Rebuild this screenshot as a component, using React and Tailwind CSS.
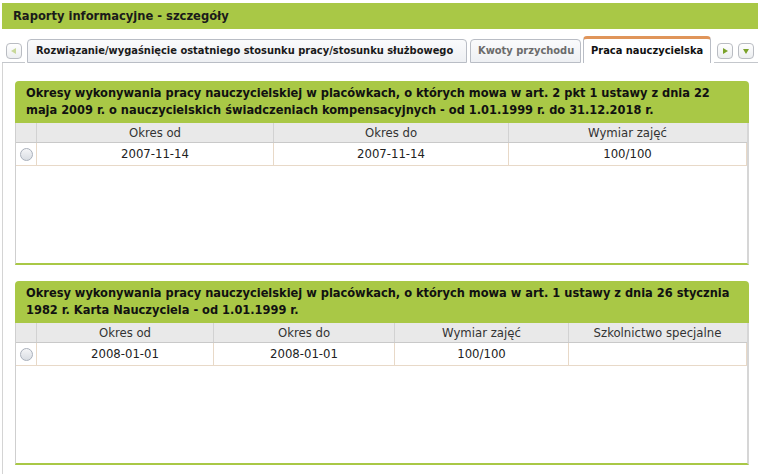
import React from "react";

const font = { fontFamily: '"DejaVu Sans Condensed", "DejaVu Sans", Tahoma, sans-serif' };

function Radio() {
  return (
    <span className="inline-block w-[13px] h-[13px] rounded-full border border-[#a9b0bb] bg-gradient-to-b from-[#f4f5f7] to-[#d9dde3]" />
  );
}

function ArrowBtn({ dir }) {
  return (
    <div className="w-[16px] h-[16px] rounded-[4px] border border-[#b9bcc2] bg-gradient-to-b from-white to-[#eceef0] flex items-center justify-center">
      <svg width="8" height="8" viewBox="0 0 8 8">
        {dir === "left" && <polygon points="6,1 6,7 1,4" fill="#c8d89a" />}
        {dir === "right" && <polygon points="2,1 2,7 7,4" fill="#7aa22a" />}
        {dir === "down" && <polygon points="1,2 7,2 4,7" fill="#7aa22a" />}
      </svg>
    </div>
  );
}

function Section({ title, cols, row, widths }) {
  return (
    <div className="mx-[12px] w-[734px]">
      <div className="bg-[#a9c846] rounded-t-[4px] h-[42px] pl-[11px] pr-[8px] pt-[3px] text-[12.7px] leading-[17px] font-bold text-[#111]">
        {title}
      </div>
      <div className="h-[142px] border-l border-[#cfcfcf] border-r-2 border-r-[#d6d6d6] border-b-2 border-b-[#a9c846] bg-white">
        <div className="flex h-[20px] bg-[#e9e9e9] border-b border-[#c9c9c9] text-[13px] text-[#333]">
          <div className="w-[21px] border-r border-[#d2d2d2]" />
          {cols.map((c, i) => (
            <div
              key={i}
              className={`flex items-center justify-center ${i < cols.length - 1 ? "border-r border-[#d2d2d2]" : ""}`}
              style={{ width: widths[i] }}
            >
              {c}
            </div>
          ))}
        </div>
        <div className="flex h-[23px] border-b border-[#e8d9c8] border-r text-[13px] text-[#222]">
          <div className="w-[21px] flex items-center justify-center border-r border-[#e8d9c8]">
            <Radio />
          </div>
          {row.map((c, i) => (
            <div
              key={i}
              className={`flex items-center justify-center ${i < row.length - 1 ? "border-r border-[#e8d9c8]" : ""}`}
              style={{ width: widths[i] }}
            >
              {c}
            </div>
          ))}
        </div>
      </div>
    </div>
  );
}

export default function App() {
  return (
    <div className="w-[758px] h-[474px] bg-white overflow-hidden" style={font}>
      <div className="pt-[3px] pl-[2px]">
        <div className="h-[26px] bg-[#a9c846] flex items-center pl-[11px] text-[12.8px] font-bold text-[#1a1a1a]">
          Raporty informacyjne - szczegóły
        </div>
      </div>
      {/* tab strip */}
      <div className="flex items-end h-[34px] pl-[2px]">
        <div className="w-[23px] h-[26px] border-b border-[#c4c7cc] flex items-start pl-[4px] pt-[6px]">
          <ArrowBtn dir="left" />
        </div>
        <div className="flex items-end gap-[3px] ml-[2px]">
          <div className="h-[24px] w-[440px] rounded-t-[4px] border border-[#b9bdc5] bg-gradient-to-b from-[#fafbfc] to-[#eef0f3] pl-[8px] flex items-center text-[11px] font-bold text-[#1a1a1a] whitespace-nowrap">
            Rozwiązanie/wygaśnięcie ostatniego stosunku pracy/stosunku służbowego
          </div>
          <div className="h-[24px] w-[111px] rounded-t-[4px] border border-[#b9bdc5] bg-gradient-to-b from-[#fafbfc] to-[#eef0f3] pl-[7px] flex items-center text-[11px] font-bold text-[#6b6b6b] whitespace-nowrap">
            Kwoty przychodu
          </div>
          <div className="h-[27px] w-[128px] -ml-[1px] rounded-t-[4px] border border-b-0 border-[#b9bdc5] border-t-[3px] border-t-[#e0955a] bg-white pl-[7px] flex items-center text-[11px] font-bold text-[#111] whitespace-nowrap">
            Praca nauczycielska
          </div>
        </div>
        <div className="flex-1 h-[26px] border-b border-[#c4c7cc] flex items-start gap-[5px] pl-[3px] pt-[6px] ml-[3px]">
          <ArrowBtn dir="right" />
          <ArrowBtn dir="down" />
        </div>
      </div>
      <div className="ml-[2px] border-l border-[#d4d4d4] h-[411px] pt-[18px] flex flex-col gap-[16px]">
        <Section
          title="Okresy wykonywania pracy nauczycielskiej w placówkach, o których mowa w art. 2 pkt 1 ustawy z dnia 22 maja 2009 r. o nauczycielskich świadczeniach kompensacyjnych - od 1.01.1999 r. do 31.12.2018 r."
          cols={["Okres od", "Okres do", "Wymiar zajęć"]}
          row={["2007-11-14", "2007-11-14", "100/100"]}
          widths={[237, 235, 237]}
        />
        <Section
          title="Okresy wykonywania pracy nauczycielskiej w placówkach, o których mowa w art. 1 ustawy z dnia 26 stycznia 1982 r. Karta Nauczyciela - od 1.01.1999 r."
          cols={["Okres od", "Okres do", "Wymiar zajęć", "Szkolnictwo specjalne"]}
          row={["2008-01-01", "2008-01-01", "100/100", ""]}
          widths={[177, 181, 174, 177]}
        />
      </div>
    </div>
  );
}
